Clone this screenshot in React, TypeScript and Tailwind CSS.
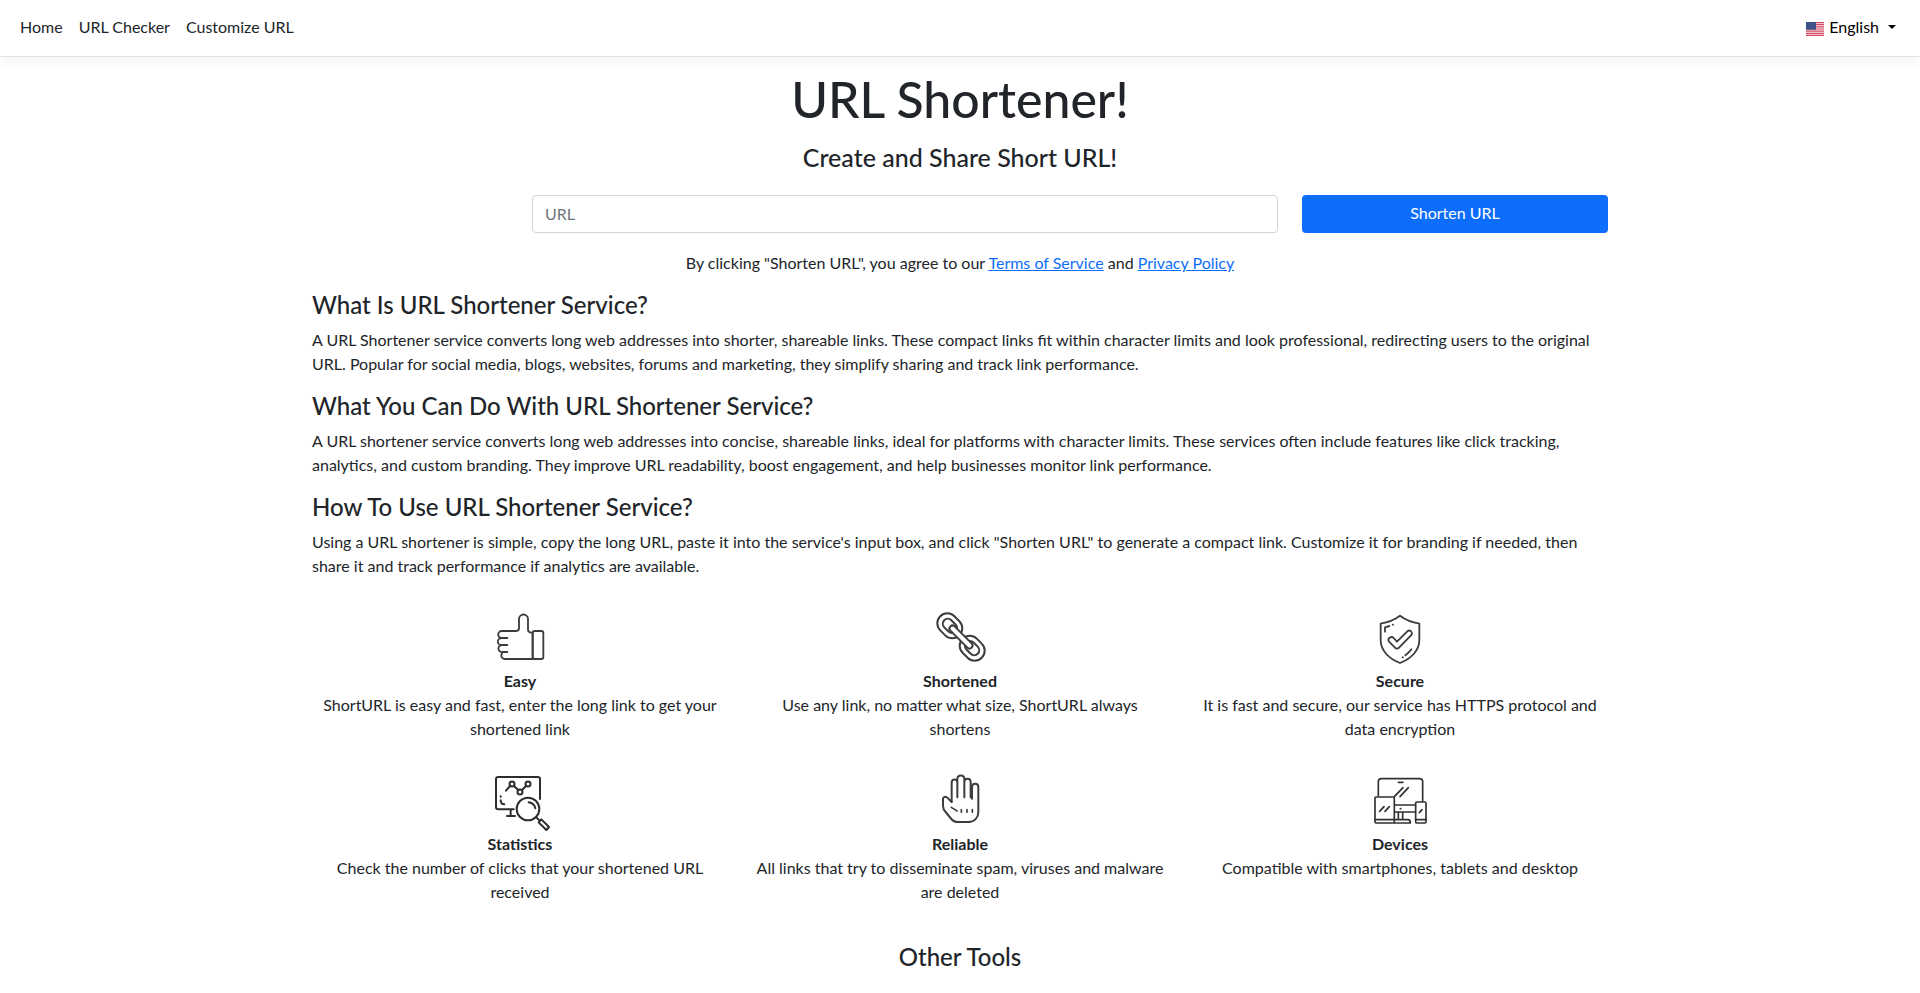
import React from "react";

const navLinks = ["Home", "URL Checker", "Customize URL"];

const sections = [
  {
    title: "What Is URL Shortener Service?",
    body: "A URL Shortener service converts long web addresses into shorter, shareable links. These compact links fit within character limits and look professional, redirecting users to the original URL. Popular for social media, blogs, websites, forums and marketing, they simplify sharing and track link performance.",
  },
  {
    title: "What You Can Do With URL Shortener Service?",
    body: "A URL shortener service converts long web addresses into concise, shareable links, ideal for platforms with character limits. These services often include features like click tracking, analytics, and custom branding. They improve URL readability, boost engagement, and help businesses monitor link performance.",
  },
  {
    title: "How To Use URL Shortener Service?",
    body: 'Using a URL shortener is simple, copy the long URL, paste it into the service\'s input box, and click "Shorten URL" to generate a compact link. Customize it for branding if needed, then share it and track performance if analytics are available.',
  },
];

type IconProps = { viewBox: string; children: React.ReactNode };

function Icon({ viewBox, children }: IconProps) {
  return (
    <svg
      aria-hidden="true"
      viewBox={viewBox}
      className="mx-auto block size-16"
      fill="none"
      stroke="#3c3c3e"
      strokeWidth="5.5"
      strokeLinecap="round"
      strokeLinejoin="round"
    >
      {children}
    </svg>
  );
}

function ThumbIcon() {
  return (
    <Icon viewBox="24 15 192 192">
      <path d="M82 114H65a10.500 10.500 0 0 1 0-21h44a8 8 0 0 0 8-8V57a13 13 0 0 1 27 0v32a10 10 0 0 0 10 9h4v79H74a10 10 0 0 1-8-16M82 135H64a10.500 10.500 0 0 1 0-21M82 156H68a10.500 10.500 0 0 1-4-21" />
      <rect x="158" y="93" width="32" height="84" rx="6" />
    </Icon>
  );
}

function ChainIcon() {
  return (
    <Icon viewBox="24 15 192 192">
      <g transform="rotate(45 123 111)" strokeWidth="6">
        <rect x="35" y="81" width="81" height="60" rx="30" />
        <rect x="52" y="96" width="48" height="30" rx="15" />
        <rect x="130" y="81" width="81" height="60" rx="30" />
        <rect x="146" y="96" width="48" height="30" rx="15" />
        <rect x="78" y="102" width="90" height="18" rx="9" fill="#fff" />
      </g>
    </Icon>
  );
}

function ShieldIcon() {
  return (
    <Icon viewBox="24 15 192 192">
      <path d="M120 47C104 59 84 67 62 71v49c0 31 24 56 58 69 34-13 58-38 58-69V71c-22-4-42-12-58-24Z" />
      <path d="M91 112a8 8 0 0 0-4 13l18 18a8 8 0 0 0 12 0l36-37a8 8 0 0 0-11-12l-31 31-10-11a8 8 0 0 0-10-2Z" />
      <path d="M75 95V82l13-4M98 74h1M128 172h1M136 166c7-5 13-11 18-18" />
    </Icon>
  );
}

function StatisticsIcon() {
  return (
    <Icon viewBox="24 24 192 192">
      <g stroke="#2d2d2f" strokeWidth="6">
        <path d="M180 117V58a7 7 0 0 0-7-7H55a7 7 0 0 0-7 7v83a7 7 0 0 0 7 7h46M92 150v17M81 168h24" />
        <path d="M78 92l13-15M102 78l13 12M126 90l12-12" />
        <circle cx="96" cy="72" r="7.500" />
        <circle cx="120" cy="96" r="7.500" />
        <circle cx="144" cy="72" r="7.500" />
        <path d="M62 109v1M62 121c0 8 4 12 11 12" />
        <circle cx="144" cy="147" r="34" />
        <path d="M146 127c11 2 18 8 20 18M169 172l9 9" />
        <path d="M176 187l8-9 23 23-8 9Z" />
      </g>
    </Icon>
  );
}

function HandIcon() {
  return (
    <Icon viewBox="24 24 192 192">
      <path d="M95 126 82 113c-5-4-13-3-13 4v20c0 8 3 14 8 19l17 21c6 7 11 9 19 9h33c17 0 29-13 29-29V81c0-13-19-13-19 0" strokeWidth="6" />
      <path d="M95 125V68c0-13 17-13 17 0v44M112 112V57c0-14 21-14 21 0v55M133 66c0-13 19-13 19 0v46M156 81v35" strokeWidth="6" />
      <path d="M94 142c6 4 11 7 17 11M124 149v8M141 149v8M157 149v8" strokeWidth="5" />
    </Icon>
  );
}

function DevicesIcon() {
  return (
    <Icon viewBox="24 24 192 192">
      <g strokeWidth="5" stroke="#303032">
        <path d="M55 107V65a9 9 0 0 1 9-9h115a9 9 0 0 1 9 9v58" />
        <rect x="45" y="111" width="58" height="78" rx="3" />
        <path d="M45 179h58M115 67h14M103 110l26-27M120 110l25-27M59 154l13-14M75 154l13-14" />
        <path d="M104 135h61M104 156h61M121 146h1M115 158v20M128 158v20M104 179h40c5 0 7 3 7 10h-48" />
        <rect x="167" y="126" width="31" height="63" rx="4" />
        <path d="M167 179h31M178 158l8-9" />
      </g>
    </Icon>
  );
}

const features = [
  { title: "Easy", text: "ShortURL is easy and fast, enter the long link to get your shortened link", Art: ThumbIcon },
  { title: "Shortened", text: "Use any link, no matter what size, ShortURL always shortens", Art: ChainIcon },
  { title: "Secure", text: "It is fast and secure, our service has HTTPS protocol and data encryption", Art: ShieldIcon },
  { title: "Statistics", text: "Check the number of clicks that your shortened URL received", Art: StatisticsIcon },
  { title: "Reliable", text: "All links that try to disseminate spam, viruses and malware are deleted", Art: HandIcon },
  { title: "Devices", text: "Compatible with smartphones, tablets and desktop", Art: DevicesIcon },
];

function UsFlag() {
  return (
    <svg aria-hidden="true" viewBox="0 0 54 42" className="mt-1 h-3.5 w-[18px]">
      <rect width="54" height="42" fill="#fbeef0" />
      <path
        d="M0 2h54M0 8h54M0 14.500h54M0 21h54M0 27.500h54M0 34h54M0 40h54"
        stroke="#d4475e"
        strokeWidth="3.300"
      />
      <rect width="30" height="23" fill="#33497f" />
      <path
        d="M3 4h26M5 8h24M3 12h26M5 16h24M3 20h26"
        stroke="#8795b8"
        strokeWidth="1.500"
        strokeDasharray="2 3"
      />
    </svg>
  );
}

export default function App() {
  return (
    <div className="bg-white font-[Lato,Carlito,sans-serif] text-base text-[#212529]">
      <header className="border-b border-[#dee2e6] shadow-[0_8px_10px_rgba(0,0,0,0.03)]">
        <nav className="flex h-14 items-center justify-between px-3 pb-0.5">
          <ul className="flex">
            {navLinks.map((label) => (
              <li key={label}>
                <a href="#" className="block px-2 py-2">
                  {label}
                </a>
              </li>
            ))}
          </ul>
          <button type="button" className="flex items-center gap-[5px] px-3 py-2 text-black">
            <UsFlag />
            <span>English</span>
            <svg aria-hidden="true" viewBox="0 0 8 4" className="ml-1 h-1 w-2">
              <path d="M0 0h8L4 4Z" fill="currentColor" />
            </svg>
          </button>
        </nav>
      </header>

      <main className="mx-auto max-w-[1320px] px-3">
        <h1 className="mt-3 text-center text-[50px] leading-[60px] font-medium">URL Shortener!</h1>
        <h2 className="mt-[13px] text-center text-[25px] leading-[30px] font-medium">Create and Share Short URL!</h2>

        <form className="mt-[23px] grid grid-cols-12 gap-6" onSubmit={(e) => e.preventDefault()}>
          <input
            type="url"
            aria-label="URL"
            placeholder="URL"
            className="col-span-7 col-start-3 h-[38px] rounded border border-[#ced4da] px-3 pb-0.5 placeholder:text-[#6c757d]"
          />
          <button type="submit" className="col-span-3 h-[38px] rounded bg-[#0d6efd] pb-0.5 text-white">
            Shorten URL
          </button>
        </form>

        <p className="mt-[18px] text-center">
          By clicking "Shorten URL", you agree to our{" "}
          <a href="#" className="text-[#0d6efd] underline">
            Terms of Service
          </a>{" "}
          and{" "}
          <a href="#" className="text-[#0d6efd] underline">
            Privacy Policy
          </a>
        </p>

        {sections.map((s) => (
          <section key={s.title} className="mt-[15px]">
            <h3 className="text-2xl leading-[29px] font-medium">{s.title}</h3>
            <p className="mt-[9px]">{s.body}</p>
          </section>
        ))}

        <ul className="mt-[27px] grid grid-cols-3 gap-x-6 gap-y-[27px]">
          {features.map(({ title, text, Art }) => (
            <li key={title} className="text-center">
              <Art />
              <h4 className="font-bold">{title}</h4>
              <p>{text}</p>
            </li>
          ))}
        </ul>

        <h3 className="mt-[38px] text-center text-2xl leading-[29px] font-medium">Other Tools</h3>
      </main>
    </div>
  );
}
